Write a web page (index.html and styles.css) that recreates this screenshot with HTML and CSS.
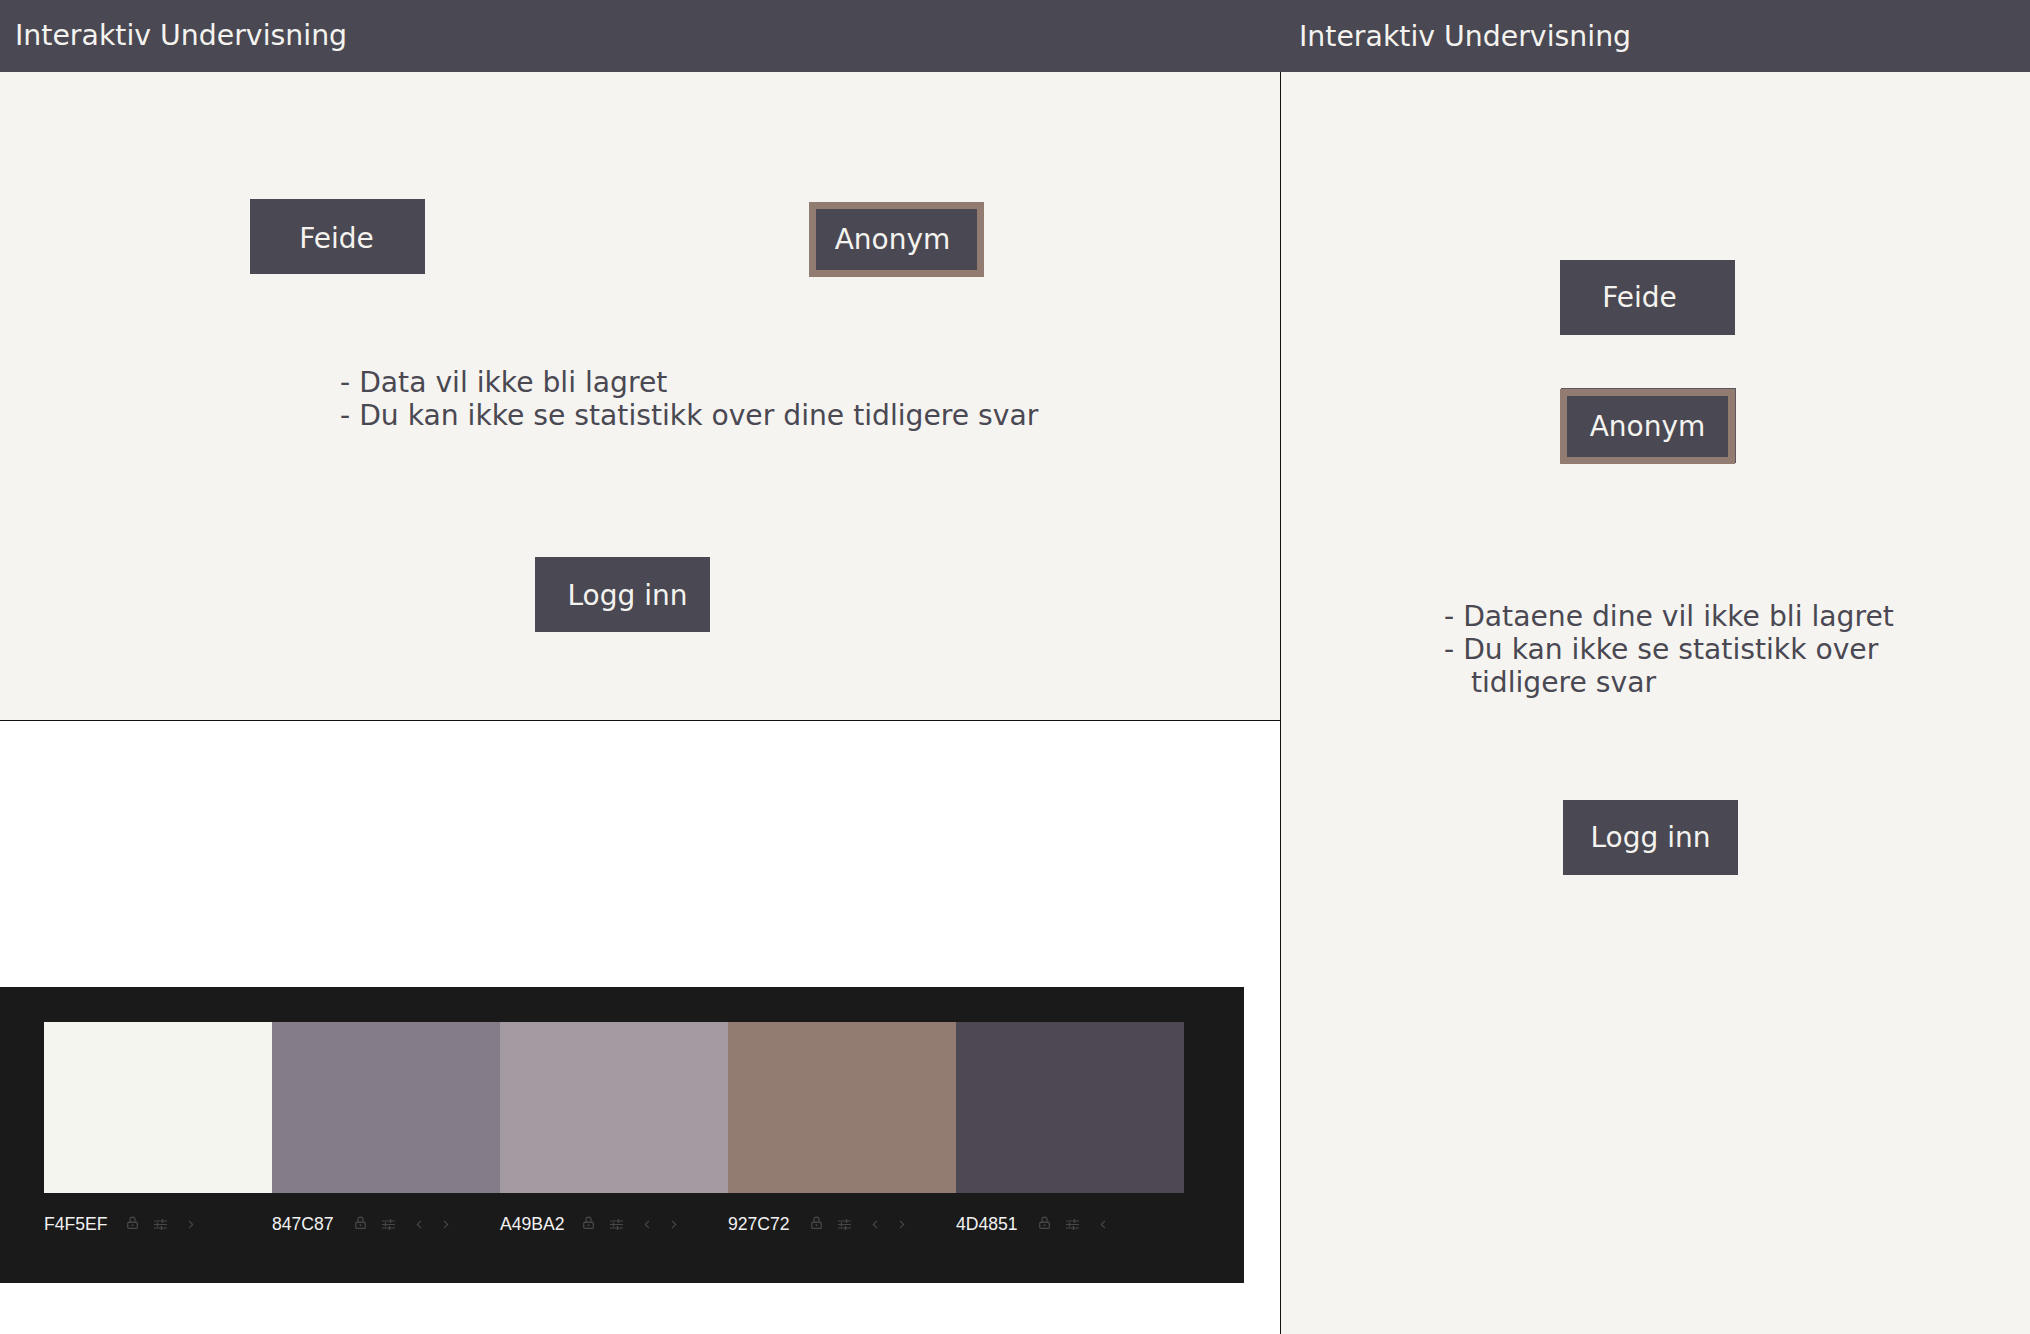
FILE: index.html
```html
<!DOCTYPE html>
<html lang="no">
<head>
<meta charset="utf-8">
<title>Interaktiv Undervisning</title>
<link rel="stylesheet" href="styles.css">
</head>
<body>
<div class="page">
  <section class="left">
    <div class="frame">
      <header class="bar bar-left">Interaktiv Undervisning</header>
      <div class="frame-body">
        <div class="choice-row">
          <div class="btn btn-feide-l">Feide</div>
          <div class="btn btn-anon btn-anon-l">Anonym</div>
        </div>
        <div class="info info-l">
          <span>- Data vil ikke bli lagret</span>
          <span>- Du kan ikke se statistikk over dine tidligere svar</span>
        </div>
        <div class="btn btn-login-l">Logg inn</div>
      </div>
    </div>

    <div class="palette">
      <div class="pcol">
        <div class="chip c1"></div>
        <div class="meta">
          <span class="hex">F4F5EF</span>
          <svg class="ic lock" width="11" height="13" viewBox="0 0 11 13"><path d="M3 6.5V3.6a2.5 2.5 0 0 1 5 0V5" fill="none" stroke="currentColor" stroke-width="1.3"/><rect x="0.75" y="6.25" width="9.5" height="6.2" rx="1.2" fill="none" stroke="currentColor" stroke-width="1.3"/><circle cx="5.5" cy="9.3" r="1" fill="currentColor"/></svg>
          <svg class="ic tune" width="13" height="11" viewBox="0 0 13 11"><path d="M0 2h13M0 5.5h13M0 9h13" stroke="currentColor" stroke-width="1.2"/><path d="M8.5 0v4M3.5 3.5v4M7.5 7v4" stroke="currentColor" stroke-width="1.4"/></svg>
          <svg class="ic chev" width="6" height="9" viewBox="0 0 6 9"><path d="M1 0.8l3.7 3.7L1 8.2" fill="none" stroke="currentColor" stroke-width="1.2"/></svg>
        </div>
      </div>
      <div class="pcol">
        <div class="chip c2"></div>
        <div class="meta">
          <span class="hex">847C87</span>
          <svg class="ic lock" width="11" height="13" viewBox="0 0 11 13"><path d="M3 6.5V3.6a2.5 2.5 0 0 1 5 0V5" fill="none" stroke="currentColor" stroke-width="1.3"/><rect x="0.75" y="6.25" width="9.5" height="6.2" rx="1.2" fill="none" stroke="currentColor" stroke-width="1.3"/><circle cx="5.5" cy="9.3" r="1" fill="currentColor"/></svg>
          <svg class="ic tune" width="13" height="11" viewBox="0 0 13 11"><path d="M0 2h13M0 5.5h13M0 9h13" stroke="currentColor" stroke-width="1.2"/><path d="M8.5 0v4M3.5 3.5v4M7.5 7v4" stroke="currentColor" stroke-width="1.4"/></svg>
          <svg class="ic chev" width="6" height="9" viewBox="0 0 6 9"><path d="M5 0.8L1.3 4.5 5 8.2" fill="none" stroke="currentColor" stroke-width="1.2"/></svg>
          <svg class="ic chev" width="6" height="9" viewBox="0 0 6 9"><path d="M1 0.8l3.7 3.7L1 8.2" fill="none" stroke="currentColor" stroke-width="1.2"/></svg>
        </div>
      </div>
      <div class="pcol">
        <div class="chip c3"></div>
        <div class="meta">
          <span class="hex">A49BA2</span>
          <svg class="ic lock" width="11" height="13" viewBox="0 0 11 13"><path d="M3 6.5V3.6a2.5 2.5 0 0 1 5 0V5" fill="none" stroke="currentColor" stroke-width="1.3"/><rect x="0.75" y="6.25" width="9.5" height="6.2" rx="1.2" fill="none" stroke="currentColor" stroke-width="1.3"/><circle cx="5.5" cy="9.3" r="1" fill="currentColor"/></svg>
          <svg class="ic tune" width="13" height="11" viewBox="0 0 13 11"><path d="M0 2h13M0 5.5h13M0 9h13" stroke="currentColor" stroke-width="1.2"/><path d="M8.5 0v4M3.5 3.5v4M7.5 7v4" stroke="currentColor" stroke-width="1.4"/></svg>
          <svg class="ic chev" width="6" height="9" viewBox="0 0 6 9"><path d="M5 0.8L1.3 4.5 5 8.2" fill="none" stroke="currentColor" stroke-width="1.2"/></svg>
          <svg class="ic chev" width="6" height="9" viewBox="0 0 6 9"><path d="M1 0.8l3.7 3.7L1 8.2" fill="none" stroke="currentColor" stroke-width="1.2"/></svg>
        </div>
      </div>
      <div class="pcol">
        <div class="chip c4"></div>
        <div class="meta">
          <span class="hex">927C72</span>
          <svg class="ic lock" width="11" height="13" viewBox="0 0 11 13"><path d="M3 6.5V3.6a2.5 2.5 0 0 1 5 0V5" fill="none" stroke="currentColor" stroke-width="1.3"/><rect x="0.75" y="6.25" width="9.5" height="6.2" rx="1.2" fill="none" stroke="currentColor" stroke-width="1.3"/><circle cx="5.5" cy="9.3" r="1" fill="currentColor"/></svg>
          <svg class="ic tune" width="13" height="11" viewBox="0 0 13 11"><path d="M0 2h13M0 5.5h13M0 9h13" stroke="currentColor" stroke-width="1.2"/><path d="M8.5 0v4M3.5 3.5v4M7.5 7v4" stroke="currentColor" stroke-width="1.4"/></svg>
          <svg class="ic chev" width="6" height="9" viewBox="0 0 6 9"><path d="M5 0.8L1.3 4.5 5 8.2" fill="none" stroke="currentColor" stroke-width="1.2"/></svg>
          <svg class="ic chev" width="6" height="9" viewBox="0 0 6 9"><path d="M1 0.8l3.7 3.7L1 8.2" fill="none" stroke="currentColor" stroke-width="1.2"/></svg>
        </div>
      </div>
      <div class="pcol">
        <div class="chip c5"></div>
        <div class="meta">
          <span class="hex">4D4851</span>
          <svg class="ic lock" width="11" height="13" viewBox="0 0 11 13"><path d="M3 6.5V3.6a2.5 2.5 0 0 1 5 0V5" fill="none" stroke="currentColor" stroke-width="1.3"/><rect x="0.75" y="6.25" width="9.5" height="6.2" rx="1.2" fill="none" stroke="currentColor" stroke-width="1.3"/><circle cx="5.5" cy="9.3" r="1" fill="currentColor"/></svg>
          <svg class="ic tune" width="13" height="11" viewBox="0 0 13 11"><path d="M0 2h13M0 5.5h13M0 9h13" stroke="currentColor" stroke-width="1.2"/><path d="M8.5 0v4M3.5 3.5v4M7.5 7v4" stroke="currentColor" stroke-width="1.4"/></svg>
          <svg class="ic chev" width="6" height="9" viewBox="0 0 6 9"><path d="M5 0.8L1.3 4.5 5 8.2" fill="none" stroke="currentColor" stroke-width="1.2"/></svg>
        </div>
      </div>
    </div>
  </section>

  <section class="right">
    <header class="bar bar-right">Interaktiv Undervisning</header>
    <div class="right-body">
      <div class="btn btn-feide-r">Feide</div>
      <div class="btn btn-anon btn-anon-r">Anonym</div>
      <div class="info info-r">
        <span>- Dataene dine vil ikke bli lagret</span>
        <span>- Du kan ikke se statistikk over</span>
        <span>   tidligere svar</span>
      </div>
      <div class="btn btn-login-r">Logg inn</div>
    </div>
  </section>
</div>
</body>
</html>
```

FILE: styles.css
```css
html, body {
  margin: 0;
  padding: 0;
  background: #ffffff;
}

body {
  font-family: "DejaVu Sans", "Noto Sans", sans-serif;
}

.page {
  display: flex;
  width: 2030px;
  height: 1334px;
  overflow: hidden;
}

.left {
  width: 1280px;
  flex: none;
}

.bar {
  height: 72px;
  box-sizing: border-box;
  background: #4a4852;
  color: #f4f3ef;
  font-size: 28.35px;
  line-height: 33px;
  white-space: nowrap;
}

.bar-left {
  padding: 19px 0 0 15px;
}

.bar-right {
  padding: 20px 0 0 19px;
}

.frame-body {
  height: 649px;
  box-sizing: border-box;
  padding-top: 127px;
  background: #f5f4f0;
  border-bottom: 1px solid #111111;
}

.choice-row {
  display: flex;
  align-items: flex-start;
}

.btn {
  width: 175px;
  height: 75px;
  box-sizing: border-box;
  display: flex;
  align-items: center;
  justify-content: center;
  background: #4a4852;
  color: #f4f3ef;
  font-size: 28px;
  line-height: 33px;
  white-space: nowrap;
}

.btn-anon {
  border: 7px solid #927c72;
}

.btn-feide-l {
  margin-left: 250px;
  padding-top: 3px;
  padding-right: 2px;
}

.btn-anon-l {
  margin-left: 384px;
  margin-top: 3px;
  padding-right: 8px;
}

.info {
  display: flex;
  flex-direction: column;
  color: #4a4852;
  font-size: 28.2px;
  line-height: 33px;
  white-space: pre;
}

.info-l {
  margin: 89px 0 0 340px;
}

.btn-login-l {
  margin: 125px 0 0 535px;
  padding-left: 10px;
  padding-top: 2px;
}

/* palette */
.palette {
  display: flex;
  margin-top: 266px;
  width: 1244px;
  height: 296px;
  box-sizing: border-box;
  padding: 35px 0 0 44px;
  background: #1a1a1a;
}

.pcol {
  width: 228px;
  flex: none;
}

.chip {
  height: 171px;
}

.c1 { background: #f4f5ef; }
.c2 { background: #847c87; }
.c3 { background: #a49ba2; }
.c4 { background: #927c72; }
.c5 { background: #4d4851; }

.meta {
  display: flex;
  align-items: center;
  height: 20px;
  margin-top: 21px;
  color: #474747;
}

.hex {
  width: 83px;
  flex: none;
  font-family: "Liberation Sans", Arial, sans-serif;
  font-size: 17.6px;
  line-height: 20px;
  color: #f2f2f2;
}

.ic {
  display: block;
  flex: none;
}

.lock {
  margin-top: -3px;
}

.tune {
  margin-left: 16px;
}

.chev {
  margin-left: 21px;
}

/* right frame */
.right {
  flex: 1;
  display: flex;
  flex-direction: column;
}

.right-body {
  flex: 1;
  display: flex;
  flex-direction: column;
  align-items: flex-start;
  padding-top: 188px;
  background: #f5f4f0;
  border-left: 1px solid #111111;
}

.btn-feide-r {
  margin-left: 279px;
  padding-right: 16px;
}

.btn-anon-r {
  margin: 54px 0 0 279px;
  box-shadow: 1px -1px 0 #5b5660;
}

.info-r {
  margin: 136px 0 0 163px;
}

.btn-login-r {
  margin: 101px 0 0 282px;
}
```
